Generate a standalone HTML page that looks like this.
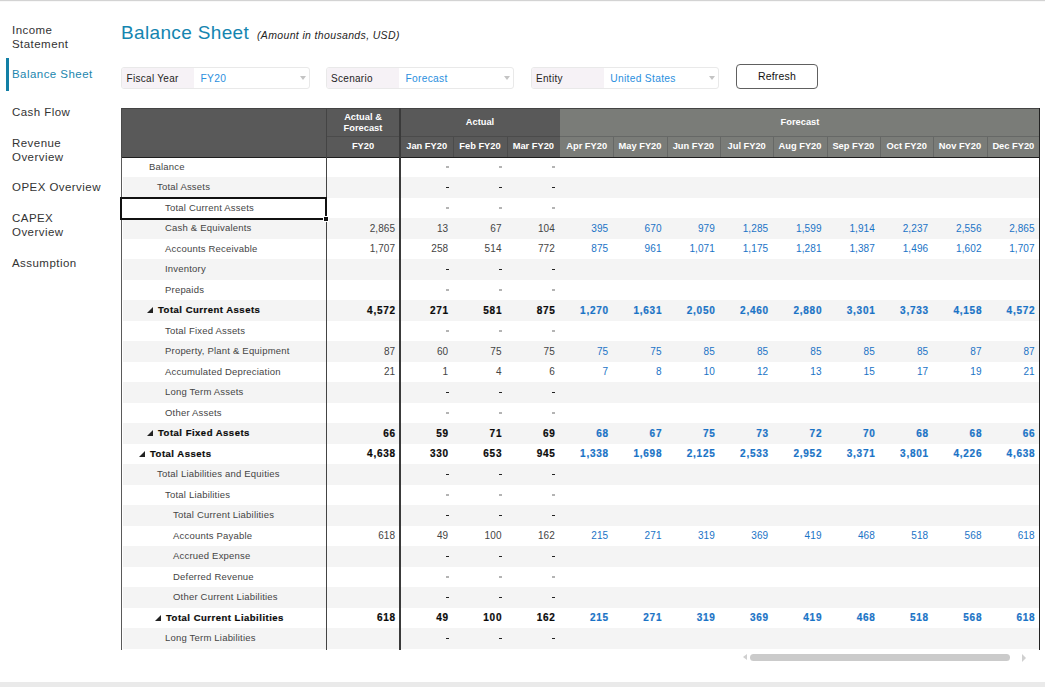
<!DOCTYPE html><html><head><meta charset="utf-8"><style>

html,body{margin:0;padding:0;}
body{width:1045px;height:687px;overflow:hidden;position:relative;background:#fff;font-family:"Liberation Sans", sans-serif;}
.ab{position:absolute;white-space:nowrap;}
.nav{position:absolute;left:12px;font-size:11.5px;letter-spacing:0.45px;color:#333;line-height:14px;}
.cell{position:absolute;white-space:nowrap;}

</style></head><body>
<div class="ab" style="left:0;top:0;width:1045px;height:1px;background:#d3d3d3"></div>
<div class="ab" style="left:0;top:1px;width:1045px;height:1px;background:#f8f8f8"></div>
<div class="ab" style="left:0;top:682px;width:1045px;height:5px;background:#eaeaea"></div>
<div class="nav" style="top:23px;color:#333">Income<br>Statement</div>
<div class="nav" style="top:67px;color:#1c86ae">Balance Sheet</div>
<div class="nav" style="top:104.8px;color:#333">Cash Flow</div>
<div class="nav" style="top:136.2px;color:#333">Revenue<br>Overview</div>
<div class="nav" style="top:180px;color:#333">OPEX Overview</div>
<div class="nav" style="top:211.2px;color:#333">CAPEX<br>Overview</div>
<div class="nav" style="top:256px;color:#333">Assumption</div>
<div class="ab" style="left:6px;top:57.5px;width:2.5px;height:33px;background:#127fa5"></div>
<div class="ab" style="left:121px;top:22px;font-size:19px;line-height:22px;color:#1485b0;letter-spacing:0.35px">Balance Sheet</div>
<div class="ab" style="left:257px;top:29px;font-size:10.5px;line-height:13px;font-style:italic;color:#252423;letter-spacing:0.35px">(Amount in thousands, USD)</div>
<div class="ab" style="left:121px;top:67px;width:187px;height:20px;border:1px solid #e9e9e9;border-radius:3px;background:#fff"></div>
<div class="ab" style="left:122px;top:68px;width:72px;height:20px;background:#f6f2f6;border-radius:2px 0 0 2px"></div>
<div class="ab" style="left:126.5px;top:70.5px;font-size:10px;line-height:15px;color:#252423;letter-spacing:0.3px">Fiscal Year</div>
<div class="ab" style="left:200.5px;top:70.5px;font-size:10.25px;line-height:15px;color:#2b8fde;letter-spacing:0.3px">FY20</div>
<div class="ab" style="left:299.5px;top:76px;width:0;height:0;border-left:3px solid transparent;border-right:3px solid transparent;border-top:4px solid #c4c4c4"></div>
<div class="ab" style="left:326px;top:67px;width:186px;height:20px;border:1px solid #e9e9e9;border-radius:3px;background:#fff"></div>
<div class="ab" style="left:327px;top:68px;width:71.60000000000002px;height:20px;background:#f6f2f6;border-radius:2px 0 0 2px"></div>
<div class="ab" style="left:331px;top:70.5px;font-size:10px;line-height:15px;color:#252423;letter-spacing:0.3px">Scenario</div>
<div class="ab" style="left:405.4px;top:70.5px;font-size:10.25px;line-height:15px;color:#2b8fde;letter-spacing:0.3px">Forecast</div>
<div class="ab" style="left:503.5px;top:76px;width:0;height:0;border-left:3px solid transparent;border-right:3px solid transparent;border-top:4px solid #c4c4c4"></div>
<div class="ab" style="left:531px;top:67px;width:186px;height:20px;border:1px solid #e9e9e9;border-radius:3px;background:#fff"></div>
<div class="ab" style="left:532px;top:68px;width:72px;height:20px;background:#f6f2f6;border-radius:2px 0 0 2px"></div>
<div class="ab" style="left:536px;top:70.5px;font-size:10px;line-height:15px;color:#252423;letter-spacing:0.3px">Entity</div>
<div class="ab" style="left:610.3px;top:70.5px;font-size:10.25px;line-height:15px;color:#2b8fde;letter-spacing:0.3px">United States</div>
<div class="ab" style="left:708.5px;top:76px;width:0;height:0;border-left:3px solid transparent;border-right:3px solid transparent;border-top:4px solid #c4c4c4"></div>
<div class="ab" style="left:736px;top:64px;width:80px;height:23px;border:1px solid #606060;border-radius:4px;background:#fff"></div>
<div class="ab" style="left:736px;top:69px;width:82px;text-align:center;font-size:10.5px;line-height:15px;color:#111;letter-spacing:0.2px">Refresh</div>
<div class="ab" style="left:121px;top:108px;width:439px;height:49px;background:#595959"></div>
<div class="ab" style="left:560px;top:108px;width:480px;height:49px;background:#7a7c78"></div>
<div class="ab" style="left:121px;top:108px;width:919px;height:1px;background:#444"></div>
<div class="ab" style="left:121px;top:108px;width:1px;height:49px;background:#4a4a4a"></div>
<div class="ab" style="left:326px;top:136px;width:234px;height:1px;background:#4b4b4b"></div>
<div class="ab" style="left:560px;top:136px;width:480px;height:1px;background:#666866"></div>
<div class="ab" style="left:453.33px;top:136px;width:1px;height:21px;background:#4b4b4b"></div>
<div class="ab" style="left:506.67px;top:136px;width:1px;height:21px;background:#4b4b4b"></div>
<div class="ab" style="left:613.33px;top:136px;width:1px;height:21px;background:#666866"></div>
<div class="ab" style="left:666.67px;top:136px;width:1px;height:21px;background:#666866"></div>
<div class="ab" style="left:720.00px;top:136px;width:1px;height:21px;background:#666866"></div>
<div class="ab" style="left:773.33px;top:136px;width:1px;height:21px;background:#666866"></div>
<div class="ab" style="left:826.67px;top:136px;width:1px;height:21px;background:#666866"></div>
<div class="ab" style="left:880.00px;top:136px;width:1px;height:21px;background:#666866"></div>
<div class="ab" style="left:933.33px;top:136px;width:1px;height:21px;background:#666866"></div>
<div class="ab" style="left:986.67px;top:136px;width:1px;height:21px;background:#666866"></div>
<div class="ab" style="left:121px;top:157px;width:919px;height:1px;background:#1e1e1e"></div>
<div class="ab" style="left:326.00px;top:111.50px;width:74.00px;text-align:center;font-size:9.3px;font-weight:bold;line-height:11px;color:#fff">Actual &amp;<br>Forecast</div>

<div class="ab" style="left:326.00px;top:141.00px;width:74.00px;text-align:center;font-size:9.3px;font-weight:bold;line-height:11px;color:#fff">FY20</div>
<div class="ab" style="left:400.00px;top:116.50px;width:160.00px;text-align:center;font-size:9.3px;font-weight:bold;line-height:11px;color:#fff">Actual</div>
<div class="ab" style="left:560.00px;top:116.50px;width:480.00px;text-align:center;font-size:9.3px;font-weight:bold;line-height:11px;color:#fff">Forecast</div>
<div class="ab" style="left:400.00px;top:141.00px;width:53.33px;text-align:center;font-size:9.3px;font-weight:bold;line-height:11px;color:#fff">Jan FY20</div>
<div class="ab" style="left:453.33px;top:141.00px;width:53.33px;text-align:center;font-size:9.3px;font-weight:bold;line-height:11px;color:#fff">Feb FY20</div>
<div class="ab" style="left:506.67px;top:141.00px;width:53.33px;text-align:center;font-size:9.3px;font-weight:bold;line-height:11px;color:#fff">Mar FY20</div>
<div class="ab" style="left:560.00px;top:141.00px;width:53.33px;text-align:center;font-size:9.3px;font-weight:bold;line-height:11px;color:#fff">Apr FY20</div>
<div class="ab" style="left:613.33px;top:141.00px;width:53.33px;text-align:center;font-size:9.3px;font-weight:bold;line-height:11px;color:#fff">May FY20</div>
<div class="ab" style="left:666.67px;top:141.00px;width:53.33px;text-align:center;font-size:9.3px;font-weight:bold;line-height:11px;color:#fff">Jun FY20</div>
<div class="ab" style="left:720.00px;top:141.00px;width:53.33px;text-align:center;font-size:9.3px;font-weight:bold;line-height:11px;color:#fff">Jul FY20</div>
<div class="ab" style="left:773.33px;top:141.00px;width:53.33px;text-align:center;font-size:9.3px;font-weight:bold;line-height:11px;color:#fff">Aug FY20</div>
<div class="ab" style="left:826.67px;top:141.00px;width:53.33px;text-align:center;font-size:9.3px;font-weight:bold;line-height:11px;color:#fff">Sep FY20</div>
<div class="ab" style="left:880.00px;top:141.00px;width:53.33px;text-align:center;font-size:9.3px;font-weight:bold;line-height:11px;color:#fff">Oct FY20</div>
<div class="ab" style="left:933.33px;top:141.00px;width:53.33px;text-align:center;font-size:9.3px;font-weight:bold;line-height:11px;color:#fff">Nov FY20</div>
<div class="ab" style="left:986.67px;top:141.00px;width:53.33px;text-align:center;font-size:9.3px;font-weight:bold;line-height:11px;color:#fff">Dec FY20</div>
<div class="cell" style="left:149px;top:159.50px;line-height:14px;font-size:9.5px;font-weight:normal;color:#444;letter-spacing:0.2px;">Balance</div>
<div class="ab" style="left:446px;top:166px;width:3px;height:2px;background:#b4b4b4"></div>
<div class="ab" style="left:499px;top:166px;width:3px;height:2px;background:#b4b4b4"></div>
<div class="ab" style="left:552px;top:166px;width:3px;height:2px;background:#b4b4b4"></div>
<div class="ab" style="left:123px;top:177.00px;width:916px;height:20.5px;background:#f4f4f4"></div>
<div class="cell" style="left:157px;top:180.00px;line-height:14px;font-size:9.5px;font-weight:normal;color:#444;letter-spacing:0.2px;">Total Assets</div>
<div class="ab" style="left:446px;top:187px;width:3px;height:1px;background:#222"></div>
<div class="ab" style="left:499px;top:187px;width:3px;height:1px;background:#222"></div>
<div class="ab" style="left:552px;top:187px;width:3px;height:1px;background:#222"></div>
<div class="cell" style="left:165px;top:200.50px;line-height:14px;font-size:9.5px;font-weight:normal;color:#444;letter-spacing:0.2px;">Total Current Assets</div>
<div class="ab" style="left:446px;top:207px;width:3px;height:2px;background:#b4b4b4"></div>
<div class="ab" style="left:499px;top:207px;width:3px;height:2px;background:#b4b4b4"></div>
<div class="ab" style="left:552px;top:207px;width:3px;height:2px;background:#b4b4b4"></div>
<div class="ab" style="left:123px;top:218.00px;width:916px;height:20.5px;background:#f4f4f4"></div>
<div class="cell" style="left:165px;top:221.00px;line-height:14px;font-size:9.5px;font-weight:normal;color:#444;letter-spacing:0.2px;">Cash &amp; Equivalents</div>
<div class="cell" style="right:649.80px;top:221.80px;line-height:14px;font-size:10px;font-weight:normal;color:#444;letter-spacing:0.1px;">2,865</div>
<div class="cell" style="right:596.77px;top:221.80px;line-height:14px;font-size:10px;font-weight:normal;color:#444;letter-spacing:0.1px;">13</div>
<div class="cell" style="right:543.43px;top:221.80px;line-height:14px;font-size:10px;font-weight:normal;color:#444;letter-spacing:0.1px;">67</div>
<div class="cell" style="right:490.10px;top:221.80px;line-height:14px;font-size:10px;font-weight:normal;color:#444;letter-spacing:0.1px;">104</div>
<div class="cell" style="right:436.77px;top:221.80px;line-height:14px;font-size:10px;font-weight:normal;color:#1a73c6;letter-spacing:0.1px;">395</div>
<div class="cell" style="right:383.43px;top:221.80px;line-height:14px;font-size:10px;font-weight:normal;color:#1a73c6;letter-spacing:0.1px;">670</div>
<div class="cell" style="right:330.10px;top:221.80px;line-height:14px;font-size:10px;font-weight:normal;color:#1a73c6;letter-spacing:0.1px;">979</div>
<div class="cell" style="right:276.77px;top:221.80px;line-height:14px;font-size:10px;font-weight:normal;color:#1a73c6;letter-spacing:0.1px;">1,285</div>
<div class="cell" style="right:223.43px;top:221.80px;line-height:14px;font-size:10px;font-weight:normal;color:#1a73c6;letter-spacing:0.1px;">1,599</div>
<div class="cell" style="right:170.10px;top:221.80px;line-height:14px;font-size:10px;font-weight:normal;color:#1a73c6;letter-spacing:0.1px;">1,914</div>
<div class="cell" style="right:116.77px;top:221.80px;line-height:14px;font-size:10px;font-weight:normal;color:#1a73c6;letter-spacing:0.1px;">2,237</div>
<div class="cell" style="right:63.43px;top:221.80px;line-height:14px;font-size:10px;font-weight:normal;color:#1a73c6;letter-spacing:0.1px;">2,556</div>
<div class="cell" style="right:10.30px;top:221.80px;line-height:14px;font-size:10px;font-weight:normal;color:#1a73c6;letter-spacing:0.1px;">2,865</div>
<div class="cell" style="left:165px;top:241.50px;line-height:14px;font-size:9.5px;font-weight:normal;color:#444;letter-spacing:0.2px;">Accounts Receivable</div>
<div class="cell" style="right:649.80px;top:242.30px;line-height:14px;font-size:10px;font-weight:normal;color:#444;letter-spacing:0.1px;">1,707</div>
<div class="cell" style="right:596.77px;top:242.30px;line-height:14px;font-size:10px;font-weight:normal;color:#444;letter-spacing:0.1px;">258</div>
<div class="cell" style="right:543.43px;top:242.30px;line-height:14px;font-size:10px;font-weight:normal;color:#444;letter-spacing:0.1px;">514</div>
<div class="cell" style="right:490.10px;top:242.30px;line-height:14px;font-size:10px;font-weight:normal;color:#444;letter-spacing:0.1px;">772</div>
<div class="cell" style="right:436.77px;top:242.30px;line-height:14px;font-size:10px;font-weight:normal;color:#1a73c6;letter-spacing:0.1px;">875</div>
<div class="cell" style="right:383.43px;top:242.30px;line-height:14px;font-size:10px;font-weight:normal;color:#1a73c6;letter-spacing:0.1px;">961</div>
<div class="cell" style="right:330.10px;top:242.30px;line-height:14px;font-size:10px;font-weight:normal;color:#1a73c6;letter-spacing:0.1px;">1,071</div>
<div class="cell" style="right:276.77px;top:242.30px;line-height:14px;font-size:10px;font-weight:normal;color:#1a73c6;letter-spacing:0.1px;">1,175</div>
<div class="cell" style="right:223.43px;top:242.30px;line-height:14px;font-size:10px;font-weight:normal;color:#1a73c6;letter-spacing:0.1px;">1,281</div>
<div class="cell" style="right:170.10px;top:242.30px;line-height:14px;font-size:10px;font-weight:normal;color:#1a73c6;letter-spacing:0.1px;">1,387</div>
<div class="cell" style="right:116.77px;top:242.30px;line-height:14px;font-size:10px;font-weight:normal;color:#1a73c6;letter-spacing:0.1px;">1,496</div>
<div class="cell" style="right:63.43px;top:242.30px;line-height:14px;font-size:10px;font-weight:normal;color:#1a73c6;letter-spacing:0.1px;">1,602</div>
<div class="cell" style="right:10.30px;top:242.30px;line-height:14px;font-size:10px;font-weight:normal;color:#1a73c6;letter-spacing:0.1px;">1,707</div>
<div class="ab" style="left:123px;top:259.00px;width:916px;height:20.5px;background:#f4f4f4"></div>
<div class="cell" style="left:165px;top:262.00px;line-height:14px;font-size:9.5px;font-weight:normal;color:#444;letter-spacing:0.2px;">Inventory</div>
<div class="ab" style="left:446px;top:269px;width:3px;height:1px;background:#222"></div>
<div class="ab" style="left:499px;top:269px;width:3px;height:1px;background:#222"></div>
<div class="ab" style="left:552px;top:269px;width:3px;height:1px;background:#222"></div>
<div class="cell" style="left:165px;top:282.50px;line-height:14px;font-size:9.5px;font-weight:normal;color:#444;letter-spacing:0.2px;">Prepaids</div>
<div class="ab" style="left:446px;top:289px;width:3px;height:2px;background:#b4b4b4"></div>
<div class="ab" style="left:499px;top:289px;width:3px;height:2px;background:#b4b4b4"></div>
<div class="ab" style="left:552px;top:289px;width:3px;height:2px;background:#b4b4b4"></div>
<div class="ab" style="left:123px;top:300.00px;width:916px;height:20.5px;background:#f4f4f4"></div>
<div class="ab" style="left:147px;top:307.00px;width:0;height:0;border-left:6.5px solid transparent;border-bottom:6.5px solid #222"></div>
<div class="cell" style="left:158px;top:303.00px;line-height:14px;font-size:9.5px;font-weight:bold;color:#0a0a0a;letter-spacing:0.5px;-webkit-text-stroke:0.2px #0a0a0a">Total Current Assets</div>
<div class="cell" style="right:649.15px;top:303.50px;line-height:14px;font-size:10px;font-weight:bold;color:#0a0a0a;letter-spacing:0.75px;-webkit-text-stroke:0.2px #0a0a0a">4,572</div>
<div class="cell" style="right:596.12px;top:303.50px;line-height:14px;font-size:10px;font-weight:bold;color:#0a0a0a;letter-spacing:0.75px;-webkit-text-stroke:0.2px #0a0a0a">271</div>
<div class="cell" style="right:542.78px;top:303.50px;line-height:14px;font-size:10px;font-weight:bold;color:#0a0a0a;letter-spacing:0.75px;-webkit-text-stroke:0.2px #0a0a0a">581</div>
<div class="cell" style="right:489.45px;top:303.50px;line-height:14px;font-size:10px;font-weight:bold;color:#0a0a0a;letter-spacing:0.75px;-webkit-text-stroke:0.2px #0a0a0a">875</div>
<div class="cell" style="right:436.12px;top:303.50px;line-height:14px;font-size:10px;font-weight:bold;color:#1a73c6;letter-spacing:0.75px;-webkit-text-stroke:0.2px #1a73c6">1,270</div>
<div class="cell" style="right:382.78px;top:303.50px;line-height:14px;font-size:10px;font-weight:bold;color:#1a73c6;letter-spacing:0.75px;-webkit-text-stroke:0.2px #1a73c6">1,631</div>
<div class="cell" style="right:329.45px;top:303.50px;line-height:14px;font-size:10px;font-weight:bold;color:#1a73c6;letter-spacing:0.75px;-webkit-text-stroke:0.2px #1a73c6">2,050</div>
<div class="cell" style="right:276.12px;top:303.50px;line-height:14px;font-size:10px;font-weight:bold;color:#1a73c6;letter-spacing:0.75px;-webkit-text-stroke:0.2px #1a73c6">2,460</div>
<div class="cell" style="right:222.78px;top:303.50px;line-height:14px;font-size:10px;font-weight:bold;color:#1a73c6;letter-spacing:0.75px;-webkit-text-stroke:0.2px #1a73c6">2,880</div>
<div class="cell" style="right:169.45px;top:303.50px;line-height:14px;font-size:10px;font-weight:bold;color:#1a73c6;letter-spacing:0.75px;-webkit-text-stroke:0.2px #1a73c6">3,301</div>
<div class="cell" style="right:116.12px;top:303.50px;line-height:14px;font-size:10px;font-weight:bold;color:#1a73c6;letter-spacing:0.75px;-webkit-text-stroke:0.2px #1a73c6">3,733</div>
<div class="cell" style="right:62.78px;top:303.50px;line-height:14px;font-size:10px;font-weight:bold;color:#1a73c6;letter-spacing:0.75px;-webkit-text-stroke:0.2px #1a73c6">4,158</div>
<div class="cell" style="right:9.65px;top:303.50px;line-height:14px;font-size:10px;font-weight:bold;color:#1a73c6;letter-spacing:0.75px;-webkit-text-stroke:0.2px #1a73c6">4,572</div>
<div class="cell" style="left:165px;top:323.50px;line-height:14px;font-size:9.5px;font-weight:normal;color:#444;letter-spacing:0.2px;">Total Fixed Assets</div>
<div class="ab" style="left:446px;top:330px;width:3px;height:2px;background:#b4b4b4"></div>
<div class="ab" style="left:499px;top:330px;width:3px;height:2px;background:#b4b4b4"></div>
<div class="ab" style="left:552px;top:330px;width:3px;height:2px;background:#b4b4b4"></div>
<div class="ab" style="left:123px;top:341.00px;width:916px;height:20.5px;background:#f4f4f4"></div>
<div class="cell" style="left:165px;top:344.00px;line-height:14px;font-size:9.5px;font-weight:normal;color:#444;letter-spacing:0.2px;">Property, Plant &amp; Equipment</div>
<div class="cell" style="right:649.80px;top:344.80px;line-height:14px;font-size:10px;font-weight:normal;color:#444;letter-spacing:0.1px;">87</div>
<div class="cell" style="right:596.77px;top:344.80px;line-height:14px;font-size:10px;font-weight:normal;color:#444;letter-spacing:0.1px;">60</div>
<div class="cell" style="right:543.43px;top:344.80px;line-height:14px;font-size:10px;font-weight:normal;color:#444;letter-spacing:0.1px;">75</div>
<div class="cell" style="right:490.10px;top:344.80px;line-height:14px;font-size:10px;font-weight:normal;color:#444;letter-spacing:0.1px;">75</div>
<div class="cell" style="right:436.77px;top:344.80px;line-height:14px;font-size:10px;font-weight:normal;color:#1a73c6;letter-spacing:0.1px;">75</div>
<div class="cell" style="right:383.43px;top:344.80px;line-height:14px;font-size:10px;font-weight:normal;color:#1a73c6;letter-spacing:0.1px;">75</div>
<div class="cell" style="right:330.10px;top:344.80px;line-height:14px;font-size:10px;font-weight:normal;color:#1a73c6;letter-spacing:0.1px;">85</div>
<div class="cell" style="right:276.77px;top:344.80px;line-height:14px;font-size:10px;font-weight:normal;color:#1a73c6;letter-spacing:0.1px;">85</div>
<div class="cell" style="right:223.43px;top:344.80px;line-height:14px;font-size:10px;font-weight:normal;color:#1a73c6;letter-spacing:0.1px;">85</div>
<div class="cell" style="right:170.10px;top:344.80px;line-height:14px;font-size:10px;font-weight:normal;color:#1a73c6;letter-spacing:0.1px;">85</div>
<div class="cell" style="right:116.77px;top:344.80px;line-height:14px;font-size:10px;font-weight:normal;color:#1a73c6;letter-spacing:0.1px;">85</div>
<div class="cell" style="right:63.43px;top:344.80px;line-height:14px;font-size:10px;font-weight:normal;color:#1a73c6;letter-spacing:0.1px;">87</div>
<div class="cell" style="right:10.30px;top:344.80px;line-height:14px;font-size:10px;font-weight:normal;color:#1a73c6;letter-spacing:0.1px;">87</div>
<div class="cell" style="left:165px;top:364.50px;line-height:14px;font-size:9.5px;font-weight:normal;color:#444;letter-spacing:0.2px;">Accumulated Depreciation</div>
<div class="cell" style="right:649.80px;top:365.30px;line-height:14px;font-size:10px;font-weight:normal;color:#444;letter-spacing:0.1px;">21</div>
<div class="cell" style="right:596.77px;top:365.30px;line-height:14px;font-size:10px;font-weight:normal;color:#444;letter-spacing:0.1px;">1</div>
<div class="cell" style="right:543.43px;top:365.30px;line-height:14px;font-size:10px;font-weight:normal;color:#444;letter-spacing:0.1px;">4</div>
<div class="cell" style="right:490.10px;top:365.30px;line-height:14px;font-size:10px;font-weight:normal;color:#444;letter-spacing:0.1px;">6</div>
<div class="cell" style="right:436.77px;top:365.30px;line-height:14px;font-size:10px;font-weight:normal;color:#1a73c6;letter-spacing:0.1px;">7</div>
<div class="cell" style="right:383.43px;top:365.30px;line-height:14px;font-size:10px;font-weight:normal;color:#1a73c6;letter-spacing:0.1px;">8</div>
<div class="cell" style="right:330.10px;top:365.30px;line-height:14px;font-size:10px;font-weight:normal;color:#1a73c6;letter-spacing:0.1px;">10</div>
<div class="cell" style="right:276.77px;top:365.30px;line-height:14px;font-size:10px;font-weight:normal;color:#1a73c6;letter-spacing:0.1px;">12</div>
<div class="cell" style="right:223.43px;top:365.30px;line-height:14px;font-size:10px;font-weight:normal;color:#1a73c6;letter-spacing:0.1px;">13</div>
<div class="cell" style="right:170.10px;top:365.30px;line-height:14px;font-size:10px;font-weight:normal;color:#1a73c6;letter-spacing:0.1px;">15</div>
<div class="cell" style="right:116.77px;top:365.30px;line-height:14px;font-size:10px;font-weight:normal;color:#1a73c6;letter-spacing:0.1px;">17</div>
<div class="cell" style="right:63.43px;top:365.30px;line-height:14px;font-size:10px;font-weight:normal;color:#1a73c6;letter-spacing:0.1px;">19</div>
<div class="cell" style="right:10.30px;top:365.30px;line-height:14px;font-size:10px;font-weight:normal;color:#1a73c6;letter-spacing:0.1px;">21</div>
<div class="ab" style="left:123px;top:382.00px;width:916px;height:20.5px;background:#f4f4f4"></div>
<div class="cell" style="left:165px;top:385.00px;line-height:14px;font-size:9.5px;font-weight:normal;color:#444;letter-spacing:0.2px;">Long Term Assets</div>
<div class="ab" style="left:446px;top:392px;width:3px;height:1px;background:#222"></div>
<div class="ab" style="left:499px;top:392px;width:3px;height:1px;background:#222"></div>
<div class="ab" style="left:552px;top:392px;width:3px;height:1px;background:#222"></div>
<div class="cell" style="left:165px;top:405.50px;line-height:14px;font-size:9.5px;font-weight:normal;color:#444;letter-spacing:0.2px;">Other Assets</div>
<div class="ab" style="left:446px;top:412px;width:3px;height:2px;background:#b4b4b4"></div>
<div class="ab" style="left:499px;top:412px;width:3px;height:2px;background:#b4b4b4"></div>
<div class="ab" style="left:552px;top:412px;width:3px;height:2px;background:#b4b4b4"></div>
<div class="ab" style="left:123px;top:423.00px;width:916px;height:20.5px;background:#f4f4f4"></div>
<div class="ab" style="left:147px;top:430.00px;width:0;height:0;border-left:6.5px solid transparent;border-bottom:6.5px solid #222"></div>
<div class="cell" style="left:158px;top:426.00px;line-height:14px;font-size:9.5px;font-weight:bold;color:#0a0a0a;letter-spacing:0.5px;-webkit-text-stroke:0.2px #0a0a0a">Total Fixed Assets</div>
<div class="cell" style="right:649.15px;top:426.50px;line-height:14px;font-size:10px;font-weight:bold;color:#0a0a0a;letter-spacing:0.75px;-webkit-text-stroke:0.2px #0a0a0a">66</div>
<div class="cell" style="right:596.12px;top:426.50px;line-height:14px;font-size:10px;font-weight:bold;color:#0a0a0a;letter-spacing:0.75px;-webkit-text-stroke:0.2px #0a0a0a">59</div>
<div class="cell" style="right:542.78px;top:426.50px;line-height:14px;font-size:10px;font-weight:bold;color:#0a0a0a;letter-spacing:0.75px;-webkit-text-stroke:0.2px #0a0a0a">71</div>
<div class="cell" style="right:489.45px;top:426.50px;line-height:14px;font-size:10px;font-weight:bold;color:#0a0a0a;letter-spacing:0.75px;-webkit-text-stroke:0.2px #0a0a0a">69</div>
<div class="cell" style="right:436.12px;top:426.50px;line-height:14px;font-size:10px;font-weight:bold;color:#1a73c6;letter-spacing:0.75px;-webkit-text-stroke:0.2px #1a73c6">68</div>
<div class="cell" style="right:382.78px;top:426.50px;line-height:14px;font-size:10px;font-weight:bold;color:#1a73c6;letter-spacing:0.75px;-webkit-text-stroke:0.2px #1a73c6">67</div>
<div class="cell" style="right:329.45px;top:426.50px;line-height:14px;font-size:10px;font-weight:bold;color:#1a73c6;letter-spacing:0.75px;-webkit-text-stroke:0.2px #1a73c6">75</div>
<div class="cell" style="right:276.12px;top:426.50px;line-height:14px;font-size:10px;font-weight:bold;color:#1a73c6;letter-spacing:0.75px;-webkit-text-stroke:0.2px #1a73c6">73</div>
<div class="cell" style="right:222.78px;top:426.50px;line-height:14px;font-size:10px;font-weight:bold;color:#1a73c6;letter-spacing:0.75px;-webkit-text-stroke:0.2px #1a73c6">72</div>
<div class="cell" style="right:169.45px;top:426.50px;line-height:14px;font-size:10px;font-weight:bold;color:#1a73c6;letter-spacing:0.75px;-webkit-text-stroke:0.2px #1a73c6">70</div>
<div class="cell" style="right:116.12px;top:426.50px;line-height:14px;font-size:10px;font-weight:bold;color:#1a73c6;letter-spacing:0.75px;-webkit-text-stroke:0.2px #1a73c6">68</div>
<div class="cell" style="right:62.78px;top:426.50px;line-height:14px;font-size:10px;font-weight:bold;color:#1a73c6;letter-spacing:0.75px;-webkit-text-stroke:0.2px #1a73c6">68</div>
<div class="cell" style="right:9.65px;top:426.50px;line-height:14px;font-size:10px;font-weight:bold;color:#1a73c6;letter-spacing:0.75px;-webkit-text-stroke:0.2px #1a73c6">66</div>
<div class="ab" style="left:139px;top:450.50px;width:0;height:0;border-left:6.5px solid transparent;border-bottom:6.5px solid #222"></div>
<div class="cell" style="left:150px;top:446.50px;line-height:14px;font-size:9.5px;font-weight:bold;color:#0a0a0a;letter-spacing:0.5px;-webkit-text-stroke:0.2px #0a0a0a">Total Assets</div>
<div class="cell" style="right:649.15px;top:447.00px;line-height:14px;font-size:10px;font-weight:bold;color:#0a0a0a;letter-spacing:0.75px;-webkit-text-stroke:0.2px #0a0a0a">4,638</div>
<div class="cell" style="right:596.12px;top:447.00px;line-height:14px;font-size:10px;font-weight:bold;color:#0a0a0a;letter-spacing:0.75px;-webkit-text-stroke:0.2px #0a0a0a">330</div>
<div class="cell" style="right:542.78px;top:447.00px;line-height:14px;font-size:10px;font-weight:bold;color:#0a0a0a;letter-spacing:0.75px;-webkit-text-stroke:0.2px #0a0a0a">653</div>
<div class="cell" style="right:489.45px;top:447.00px;line-height:14px;font-size:10px;font-weight:bold;color:#0a0a0a;letter-spacing:0.75px;-webkit-text-stroke:0.2px #0a0a0a">945</div>
<div class="cell" style="right:436.12px;top:447.00px;line-height:14px;font-size:10px;font-weight:bold;color:#1a73c6;letter-spacing:0.75px;-webkit-text-stroke:0.2px #1a73c6">1,338</div>
<div class="cell" style="right:382.78px;top:447.00px;line-height:14px;font-size:10px;font-weight:bold;color:#1a73c6;letter-spacing:0.75px;-webkit-text-stroke:0.2px #1a73c6">1,698</div>
<div class="cell" style="right:329.45px;top:447.00px;line-height:14px;font-size:10px;font-weight:bold;color:#1a73c6;letter-spacing:0.75px;-webkit-text-stroke:0.2px #1a73c6">2,125</div>
<div class="cell" style="right:276.12px;top:447.00px;line-height:14px;font-size:10px;font-weight:bold;color:#1a73c6;letter-spacing:0.75px;-webkit-text-stroke:0.2px #1a73c6">2,533</div>
<div class="cell" style="right:222.78px;top:447.00px;line-height:14px;font-size:10px;font-weight:bold;color:#1a73c6;letter-spacing:0.75px;-webkit-text-stroke:0.2px #1a73c6">2,952</div>
<div class="cell" style="right:169.45px;top:447.00px;line-height:14px;font-size:10px;font-weight:bold;color:#1a73c6;letter-spacing:0.75px;-webkit-text-stroke:0.2px #1a73c6">3,371</div>
<div class="cell" style="right:116.12px;top:447.00px;line-height:14px;font-size:10px;font-weight:bold;color:#1a73c6;letter-spacing:0.75px;-webkit-text-stroke:0.2px #1a73c6">3,801</div>
<div class="cell" style="right:62.78px;top:447.00px;line-height:14px;font-size:10px;font-weight:bold;color:#1a73c6;letter-spacing:0.75px;-webkit-text-stroke:0.2px #1a73c6">4,226</div>
<div class="cell" style="right:9.65px;top:447.00px;line-height:14px;font-size:10px;font-weight:bold;color:#1a73c6;letter-spacing:0.75px;-webkit-text-stroke:0.2px #1a73c6">4,638</div>
<div class="ab" style="left:123px;top:464.00px;width:916px;height:20.5px;background:#f4f4f4"></div>
<div class="cell" style="left:157px;top:467.00px;line-height:14px;font-size:9.5px;font-weight:normal;color:#444;letter-spacing:0.2px;">Total Liabilities and Equities</div>
<div class="ab" style="left:446px;top:474px;width:3px;height:1px;background:#222"></div>
<div class="ab" style="left:499px;top:474px;width:3px;height:1px;background:#222"></div>
<div class="ab" style="left:552px;top:474px;width:3px;height:1px;background:#222"></div>
<div class="cell" style="left:165px;top:487.50px;line-height:14px;font-size:9.5px;font-weight:normal;color:#444;letter-spacing:0.2px;">Total Liabilities</div>
<div class="ab" style="left:446px;top:494px;width:3px;height:2px;background:#b4b4b4"></div>
<div class="ab" style="left:499px;top:494px;width:3px;height:2px;background:#b4b4b4"></div>
<div class="ab" style="left:552px;top:494px;width:3px;height:2px;background:#b4b4b4"></div>
<div class="ab" style="left:123px;top:505.00px;width:916px;height:20.5px;background:#f4f4f4"></div>
<div class="cell" style="left:173px;top:508.00px;line-height:14px;font-size:9.5px;font-weight:normal;color:#444;letter-spacing:0.2px;">Total Current Liabilities</div>
<div class="ab" style="left:446px;top:515px;width:3px;height:1px;background:#222"></div>
<div class="ab" style="left:499px;top:515px;width:3px;height:1px;background:#222"></div>
<div class="ab" style="left:552px;top:515px;width:3px;height:1px;background:#222"></div>
<div class="cell" style="left:173px;top:528.50px;line-height:14px;font-size:9.5px;font-weight:normal;color:#444;letter-spacing:0.2px;">Accounts Payable</div>
<div class="cell" style="right:649.80px;top:529.30px;line-height:14px;font-size:10px;font-weight:normal;color:#444;letter-spacing:0.1px;">618</div>
<div class="cell" style="right:596.77px;top:529.30px;line-height:14px;font-size:10px;font-weight:normal;color:#444;letter-spacing:0.1px;">49</div>
<div class="cell" style="right:543.43px;top:529.30px;line-height:14px;font-size:10px;font-weight:normal;color:#444;letter-spacing:0.1px;">100</div>
<div class="cell" style="right:490.10px;top:529.30px;line-height:14px;font-size:10px;font-weight:normal;color:#444;letter-spacing:0.1px;">162</div>
<div class="cell" style="right:436.77px;top:529.30px;line-height:14px;font-size:10px;font-weight:normal;color:#1a73c6;letter-spacing:0.1px;">215</div>
<div class="cell" style="right:383.43px;top:529.30px;line-height:14px;font-size:10px;font-weight:normal;color:#1a73c6;letter-spacing:0.1px;">271</div>
<div class="cell" style="right:330.10px;top:529.30px;line-height:14px;font-size:10px;font-weight:normal;color:#1a73c6;letter-spacing:0.1px;">319</div>
<div class="cell" style="right:276.77px;top:529.30px;line-height:14px;font-size:10px;font-weight:normal;color:#1a73c6;letter-spacing:0.1px;">369</div>
<div class="cell" style="right:223.43px;top:529.30px;line-height:14px;font-size:10px;font-weight:normal;color:#1a73c6;letter-spacing:0.1px;">419</div>
<div class="cell" style="right:170.10px;top:529.30px;line-height:14px;font-size:10px;font-weight:normal;color:#1a73c6;letter-spacing:0.1px;">468</div>
<div class="cell" style="right:116.77px;top:529.30px;line-height:14px;font-size:10px;font-weight:normal;color:#1a73c6;letter-spacing:0.1px;">518</div>
<div class="cell" style="right:63.43px;top:529.30px;line-height:14px;font-size:10px;font-weight:normal;color:#1a73c6;letter-spacing:0.1px;">568</div>
<div class="cell" style="right:10.30px;top:529.30px;line-height:14px;font-size:10px;font-weight:normal;color:#1a73c6;letter-spacing:0.1px;">618</div>
<div class="ab" style="left:123px;top:546.00px;width:916px;height:20.5px;background:#f4f4f4"></div>
<div class="cell" style="left:173px;top:549.00px;line-height:14px;font-size:9.5px;font-weight:normal;color:#444;letter-spacing:0.2px;">Accrued Expense</div>
<div class="ab" style="left:446px;top:556px;width:3px;height:1px;background:#222"></div>
<div class="ab" style="left:499px;top:556px;width:3px;height:1px;background:#222"></div>
<div class="ab" style="left:552px;top:556px;width:3px;height:1px;background:#222"></div>
<div class="cell" style="left:173px;top:569.50px;line-height:14px;font-size:9.5px;font-weight:normal;color:#444;letter-spacing:0.2px;">Deferred Revenue</div>
<div class="ab" style="left:446px;top:576px;width:3px;height:2px;background:#b4b4b4"></div>
<div class="ab" style="left:499px;top:576px;width:3px;height:2px;background:#b4b4b4"></div>
<div class="ab" style="left:552px;top:576px;width:3px;height:2px;background:#b4b4b4"></div>
<div class="ab" style="left:123px;top:587.00px;width:916px;height:20.5px;background:#f4f4f4"></div>
<div class="cell" style="left:173px;top:590.00px;line-height:14px;font-size:9.5px;font-weight:normal;color:#444;letter-spacing:0.2px;">Other Current Liabilities</div>
<div class="ab" style="left:446px;top:597px;width:3px;height:1px;background:#222"></div>
<div class="ab" style="left:499px;top:597px;width:3px;height:1px;background:#222"></div>
<div class="ab" style="left:552px;top:597px;width:3px;height:1px;background:#222"></div>
<div class="ab" style="left:155px;top:614.50px;width:0;height:0;border-left:6.5px solid transparent;border-bottom:6.5px solid #222"></div>
<div class="cell" style="left:166px;top:610.50px;line-height:14px;font-size:9.5px;font-weight:bold;color:#0a0a0a;letter-spacing:0.5px;-webkit-text-stroke:0.2px #0a0a0a">Total Current Liabilities</div>
<div class="cell" style="right:649.15px;top:611.00px;line-height:14px;font-size:10px;font-weight:bold;color:#0a0a0a;letter-spacing:0.75px;-webkit-text-stroke:0.2px #0a0a0a">618</div>
<div class="cell" style="right:596.12px;top:611.00px;line-height:14px;font-size:10px;font-weight:bold;color:#0a0a0a;letter-spacing:0.75px;-webkit-text-stroke:0.2px #0a0a0a">49</div>
<div class="cell" style="right:542.78px;top:611.00px;line-height:14px;font-size:10px;font-weight:bold;color:#0a0a0a;letter-spacing:0.75px;-webkit-text-stroke:0.2px #0a0a0a">100</div>
<div class="cell" style="right:489.45px;top:611.00px;line-height:14px;font-size:10px;font-weight:bold;color:#0a0a0a;letter-spacing:0.75px;-webkit-text-stroke:0.2px #0a0a0a">162</div>
<div class="cell" style="right:436.12px;top:611.00px;line-height:14px;font-size:10px;font-weight:bold;color:#1a73c6;letter-spacing:0.75px;-webkit-text-stroke:0.2px #1a73c6">215</div>
<div class="cell" style="right:382.78px;top:611.00px;line-height:14px;font-size:10px;font-weight:bold;color:#1a73c6;letter-spacing:0.75px;-webkit-text-stroke:0.2px #1a73c6">271</div>
<div class="cell" style="right:329.45px;top:611.00px;line-height:14px;font-size:10px;font-weight:bold;color:#1a73c6;letter-spacing:0.75px;-webkit-text-stroke:0.2px #1a73c6">319</div>
<div class="cell" style="right:276.12px;top:611.00px;line-height:14px;font-size:10px;font-weight:bold;color:#1a73c6;letter-spacing:0.75px;-webkit-text-stroke:0.2px #1a73c6">369</div>
<div class="cell" style="right:222.78px;top:611.00px;line-height:14px;font-size:10px;font-weight:bold;color:#1a73c6;letter-spacing:0.75px;-webkit-text-stroke:0.2px #1a73c6">419</div>
<div class="cell" style="right:169.45px;top:611.00px;line-height:14px;font-size:10px;font-weight:bold;color:#1a73c6;letter-spacing:0.75px;-webkit-text-stroke:0.2px #1a73c6">468</div>
<div class="cell" style="right:116.12px;top:611.00px;line-height:14px;font-size:10px;font-weight:bold;color:#1a73c6;letter-spacing:0.75px;-webkit-text-stroke:0.2px #1a73c6">518</div>
<div class="cell" style="right:62.78px;top:611.00px;line-height:14px;font-size:10px;font-weight:bold;color:#1a73c6;letter-spacing:0.75px;-webkit-text-stroke:0.2px #1a73c6">568</div>
<div class="cell" style="right:9.65px;top:611.00px;line-height:14px;font-size:10px;font-weight:bold;color:#1a73c6;letter-spacing:0.75px;-webkit-text-stroke:0.2px #1a73c6">618</div>
<div class="ab" style="left:123px;top:628.00px;width:916px;height:20.5px;background:#f4f4f4"></div>
<div class="cell" style="left:165px;top:631.00px;line-height:14px;font-size:9.5px;font-weight:normal;color:#444;letter-spacing:0.2px;">Long Term Liabilities</div>
<div class="ab" style="left:446px;top:638px;width:3px;height:1px;background:#222"></div>
<div class="ab" style="left:499px;top:638px;width:3px;height:1px;background:#222"></div>
<div class="ab" style="left:552px;top:638px;width:3px;height:1px;background:#222"></div>
<div class="ab" style="left:121px;top:156.5px;width:1px;height:493.00px;background:#5a5a5a"></div>
<div class="ab" style="left:326px;top:108px;width:1px;height:541.50px;background:#444"></div>
<div class="ab" style="left:399px;top:108px;width:2px;height:541.50px;background:#3a3a3a"></div>
<div class="ab" style="left:1039px;top:108px;width:1px;height:541.50px;background:#222"></div>
<div class="ab" style="left:120px;top:197px;width:203px;height:19px;border:2px solid #111"></div>
<div class="ab" style="left:323px;top:216px;width:4px;height:4px;border:1px solid #fff;background:#111"></div>
<div class="ab" style="left:750px;top:654px;width:260px;height:7px;border-radius:3.5px;background:#cbcbcb"></div>
<div class="ab" style="left:742.5px;top:654px;width:0;height:0;border-top:3.5px solid transparent;border-bottom:3.5px solid transparent;border-right:4px solid #d0d0d0"></div>
<div class="ab" style="left:1022px;top:654px;width:0;height:0;border-top:4px solid transparent;border-bottom:4px solid transparent;border-left:4px solid #d0d0d0"></div>
</body></html>
